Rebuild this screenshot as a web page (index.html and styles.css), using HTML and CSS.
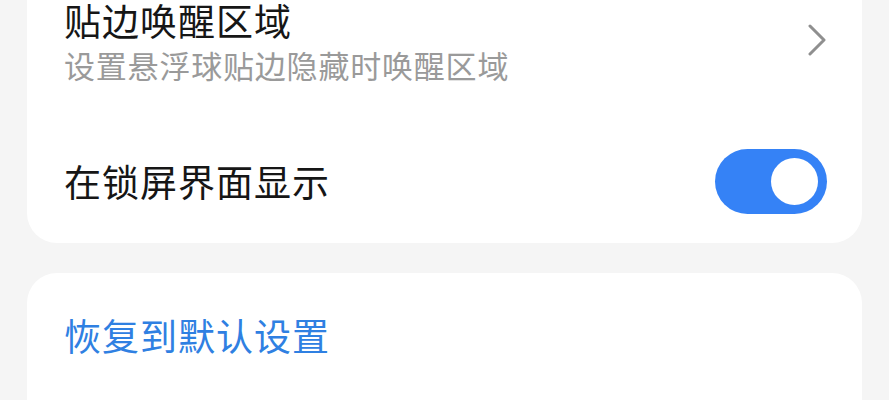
FILE: index.html
```html
<!DOCTYPE html>
<html lang="zh-CN">
<head>
<meta charset="utf-8">
<link rel="stylesheet" href="styles.css">
</head>
<body>
<div class="page">
  <section class="card card-top">
    <div class="row row-nav">
      <div class="texts">
        <div class="title">贴边唤醒区域</div>
        <div class="subtitle">设置悬浮球贴边隐藏时唤醒区域</div>
      </div>
      <svg class="chevron" width="20" height="32" viewBox="0 0 20 32" aria-hidden="true">
        <path d="M3 2 L17 16 L3 30" fill="none" stroke="#8f8f8f" stroke-width="3" stroke-linecap="round" stroke-linejoin="round"/>
      </svg>
    </div>
    <div class="row row-switch">
      <div class="title">在锁屏界面显示</div>
      <div class="switch on"><span class="knob"></span></div>
    </div>
  </section>
  <section class="card card-bottom">
    <div class="action">恢复到默认设置</div>
  </section>
</div>
</body>
</html>
```

FILE: styles.css
```css
html, body {
  margin: 0;
  padding: 0;
  background: #f5f5f5;
  overflow: hidden;
}
body {
  font-family: "Noto Sans CJK SC", "Noto Sans", sans-serif;
}
.page {
  width: 889px;
  height: 400px;
  padding: 0 27px;
  box-sizing: border-box;
  display: flex;
  flex-direction: column;
  gap: 30px;
}
.card {
  background: #ffffff;
  box-sizing: border-box;
}
.card-top {
  border-radius: 0 0 30px 30px;
  padding: 0 35px 22px 37px;
  height: 243px;
  flex: none;
}
.card-bottom {
  border-radius: 30px 30px 0 0;
  padding: 40px 37px 0 37px;
  flex: 1;
}
.row {
  display: flex;
  align-items: center;
  justify-content: space-between;
}
.row-nav {
  height: 91px;
  margin-top: -3px;
}
.row-switch {
  height: 80px;
  margin-top: 53px;
}
.title {
  font-size: 37px;
  line-height: 44px;
  font-weight: 400;
  color: #161616;
  letter-spacing: 1px;
}
.subtitle {
  font-size: 31px;
  line-height: 46px;
  color: #9a9a9a;
  letter-spacing: 0.8px;
}
.chevron {
  margin-bottom: 6px;
}
.switch {
  width: 112px;
  height: 65px;
  border-radius: 33px;
  background: #3582f6;
  position: relative;
  flex: none;
}
.knob {
  position: absolute;
  right: 9px;
  top: 9px;
  width: 47px;
  height: 47px;
  border-radius: 50%;
  background: #ffffff;
}
.action {
  font-size: 37px;
  line-height: 44px;
  font-weight: 400;
  color: #2f80e2;
  letter-spacing: 1px;
}
```
